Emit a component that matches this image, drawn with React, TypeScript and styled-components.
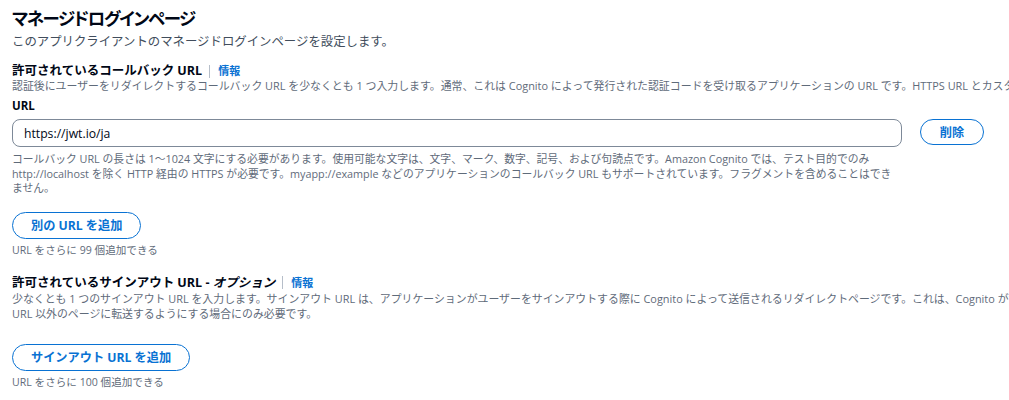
import React from "react";
import styled, { createGlobalStyle } from "styled-components";

const GlobalStyle = createGlobalStyle`
  html, body {
    margin: 0;
    padding: 0;
    background: #ffffff;
    overflow: hidden;
  }
  body {
    font-family: "Open Sans", "Noto Sans CJK JP", sans-serif;
    color: #000716;
  }
`;

const Page = styled.div`
  width: 1230px;
  padding: 7px 12px 0 12px;
  box-sizing: border-box;
`;

const Header = styled.header`
  display: flex;
  flex-direction: column;
  margin-bottom: 12px;
`;

const Title = styled.h1`
  margin: 0;
  font-family: "Noto Sans CJK JP", "Open Sans", sans-serif;
  font-feature-settings: "palt";
  letter-spacing: -1.3px;
  font-size: 17.4px;
  line-height: 22px;
  font-weight: 700;
  color: #000716;
`;

const Subtitle = styled.p`
  margin: 4px 0 0 0;
  font-size: 12.4px;
  line-height: 18px;
  color: #414d5c;
`;

const Section = styled.section`
  display: flex;
  flex-direction: column;
`;

const SectionTitleRow = styled.div<{ $top?: number }>`
  display: flex;
  align-items: center;
  height: 16px;
  margin-top: ${(p) => p.$top ?? 0}px;
`;

const SectionTitle = styled.h2`
  margin: 0;
  font-size: 12.5px;
  line-height: 16px;
  font-weight: 700;
  color: #000716;
  em {
    font-style: italic;
  }
`;

const Divider = styled.span`
  width: 1px;
  height: 13px;
  background: #b6bec9;
  margin: 0 8px 0 7px;
`;

const InfoLink = styled.a`
  font-size: 11px;
  font-weight: 700;
  color: #0972d3;
  text-decoration: none;
  line-height: 16px;
`;

const Description = styled.p<{ $lh?: number }>`
  margin: 0;
  font-size: 10.9px;
  line-height: ${(p) => p.$lh ?? 14}px;
  color: #5f6b7a;
`;

const FieldLabel = styled.label`
  display: block;
  margin-top: 6px;
  font-size: 11.5px;
  line-height: 14px;
  font-weight: 700;
  color: #000716;
`;

const EntryRow = styled.div`
  display: grid;
  grid-template-columns: 890px 64px;
  column-gap: 18px;
  align-items: start;
  margin-top: 6px;
`;

const TextInput = styled.input`
  box-sizing: border-box;
  width: 100%;
  height: 28px;
  border: 1px solid #7d8998;
  border-radius: 8px;
  padding: 0 11px;
  font-family: "Open Sans", "Noto Sans CJK JP", sans-serif;
  font-size: 12.2px;
  color: #000716;
  outline: none;
`;

const Constraint = styled.p`
  grid-column: 1 / 2;
  margin: 5px 0 0 0;
  font-size: 10.8px;
  line-height: 14.5px;
  color: #5f6b7a;
`;

const OutlineButton = styled.button`
  box-sizing: border-box;
  display: inline-flex;
  align-items: center;
  justify-content: center;
  height: 27px;
  padding: 0 18px;
  border: 1.5px solid #0972d3;
  border-radius: 20px;
  background: #ffffff;
  color: #0972d3;
  font-family: "Open Sans", "Noto Sans CJK JP", sans-serif;
  font-size: 12.2px;
  font-weight: 700;
  cursor: pointer;
`;

const RemoveButton = styled(OutlineButton)`
  width: 64px;
  height: 26px;
  padding: 0;
`;

const AddArea = styled.div<{ $top: number }>`
  display: flex;
  flex-direction: column;
  align-items: flex-start;
  margin-top: ${(p) => p.$top}px;
`;

const Hint = styled.p`
  margin: 4px 0 0 0;
  font-size: 10.6px;
  line-height: 14px;
  color: #5f6b7a;
`;

export default function App() {
  return (
    <>
      <GlobalStyle />
      <Page>
        <Header>
          <Title>マネージドログインページ</Title>
          <Subtitle>このアプリクライアントのマネージドログインページを設定します。</Subtitle>
        </Header>

        <Section>
          <SectionTitleRow>
            <SectionTitle>許可されているコールバック URL</SectionTitle>
            <Divider />
            <InfoLink href="#">情報</InfoLink>
          </SectionTitleRow>
          <Description>
            認証後にユーザーをリダイレクトするコールバック URL を少なくとも 1 つ入力します。通常、これは Cognito によって発行された認証コードを受け取るアプリケーションの URL です。HTTPS URL とカスタム URL スキームを使用できます。
          </Description>
          <FieldLabel>URL</FieldLabel>
          <EntryRow>
            <TextInput defaultValue="https://jwt.io/ja" />
            <RemoveButton>削除</RemoveButton>
            <Constraint>
              コールバック URL の長さは 1〜1024 文字にする必要があります。使用可能な文字は、文字、マーク、数字、記号、および句読点です。Amazon Cognito では、テスト目的でのみ http://localhost を除く HTTP 経由の HTTPS が必要です。myapp://example などのアプリケーションのコールバック URL もサポートされています。フラグメントを含めることはできません。
            </Constraint>
          </EntryRow>
          <AddArea $top={16}>
            <OutlineButton>別の URL を追加</OutlineButton>
            <Hint>URL をさらに 99 個追加できる</Hint>
          </AddArea>
        </Section>

        <Section>
          <SectionTitleRow $top={18}>
            <SectionTitle>
              許可されているサインアウト URL - <em>オプション</em>
            </SectionTitle>
            <Divider />
            <InfoLink href="#">情報</InfoLink>
          </SectionTitleRow>
          <Description $lh={15}>
            少なくとも 1 つのサインアウト URL を入力します。サインアウト URL は、アプリケーションがユーザーをサインアウトする際に Cognito によって送信されるリダイレクトページです。これは、Cognito がサインアウトしたユーザーをサインイン URL 以外のページに転送するようにする場合にのみ必要です。
          </Description>
          <AddArea $top={23}>
            <OutlineButton>サインアウト URL を追加</OutlineButton>
            <Hint>URL をさらに 100 個追加できる</Hint>
          </AddArea>
        </Section>
      </Page>
    </>
  );
}
